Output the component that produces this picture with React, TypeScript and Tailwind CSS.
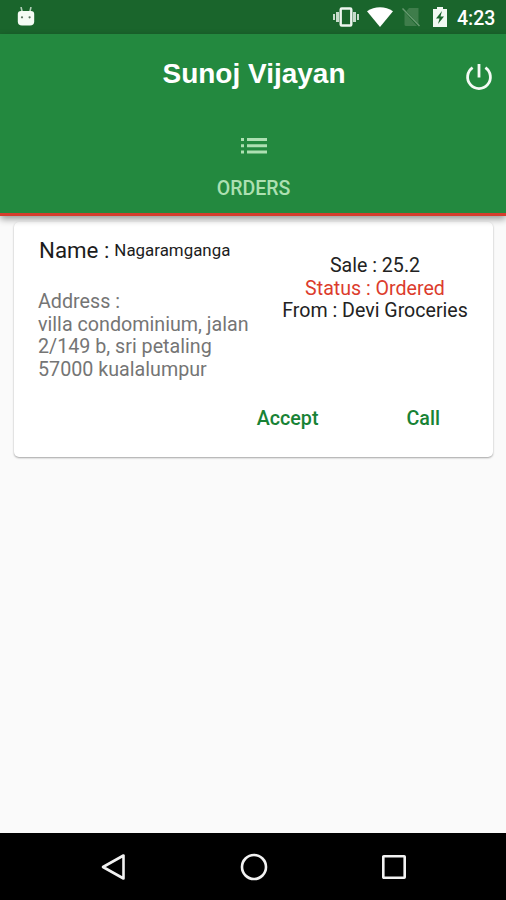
import React from 'react';

interface Order {
  name: string;
  address: string[];
  sale: string;
  status: string;
  from: string;
}

const orders: Order[] = [
  {
    name: 'Nagaramganga',
    address: ['villa condominium, jalan', '2/149 b, sri petaling', '57000 kualalumpur'],
    sale: '25.2',
    status: 'Ordered',
    from: 'Devi Groceries',
  },
];

const StatusBar = () => {
  return (
    <div className="h-[34px] bg-[#1a652c] flex items-center pl-[17px] pr-[11px] text-white">
      <svg width="18" height="20" viewBox="0 0 18 20" fill="#f4fbf4">
        <path d="M4 0 5.2 5M14 0 12.8 5" stroke="#b5d0ba" strokeWidth="1.6" />
        <path d="M.8 7Q.8 4 4 4H14Q17.200 4 17.200 7V14.500Q17.200 18.500 13 18.500H5Q.8 18.500 .8 14.500Z" />
        <circle cx="5" cy="10.300" r="1.100" fill="#56705b" />
        <circle cx="12.600" cy="10.300" r="1.100" fill="#56705b" />
      </svg>
      <svg className="ml-auto" width="26" height="20" viewBox="0 0 26 20" fill="#c6dbca">
        <path d="M0 7h2v6H0zM3 5h3v10H3zM24 7h2v6h-2zM20 5h3v10h-3z" />
        <rect x="7.700" y="1.500" width="10.600" height="17" rx="1" fill="none" stroke="#eef6ef" strokeWidth="2.400" />
      </svg>
      <svg className="ml-2" width="26" height="20" viewBox="0 0 26 20" fill="#fff">
        <path d="M0 4.200C7.500-1 18.500-1 26 4.200L13 20Z" />
      </svg>
      <svg className="ml-[9px]" width="18" height="20" viewBox="0 0 18 20">
        <path d="M7 1H16.500V17L4.500 4ZM2.500 5 15 19H4Q2.500 19 2.500 17.500Z" fill="#3f7d4b" />
        <path d="M.5 1.500 17.500 19" stroke="#689a71" strokeWidth="1.400" />
      </svg>
      <svg className="ml-[13px]" width="14" height="20" viewBox="0 0 14 20">
        <path d="M4 0h6v2h4v18H0V2h4z" fill="#f1f8f2" />
        <path d="M9 4 3 11.500H6.500L5 17 11 9.500H7.500Z" fill="#1a652c" />
      </svg>
      <span className="ml-[10px] mt-[3px] w-[38px] text-[19.5px] leading-none font-medium whitespace-nowrap">4:23</span>
    </div>
  );
};

const Header = () => {
  return (
    <div className="relative h-[182px] bg-[#23893f] border-b-[3px] border-[#d63d2e] shadow-[0_3px_7px_rgba(0,0,0,0.4)]">
      <div className="h-[79px] grid grid-cols-[1fr_auto_1fr] items-center">
        <h1 className="col-start-2 pl-[2px] font-['Liberation_Sans',Arial,sans-serif] text-[28px] font-bold text-white">
          Sunoj Vijayan
        </h1>
        <svg className="justify-self-end mr-[13px] mt-[6px]" width="28" height="28" viewBox="0 0 28 28" fill="none" stroke="#f4faf5" strokeWidth="2.800">
          <path d="M14 1V14.500M7.600 4.700A11.400 11.400 0 1 0 20.400 4.700" />
        </svg>
      </div>
      <div className="flex flex-col items-center text-[#ade0b2]">
        <svg className="ml-[1px] mt-[25px]" width="26" height="16" viewBox="0 0 26 16" fill="currentColor">
          <path d="M0 0h3v3H0zM6 0h20v3H6zM0 6.300h3v3H0zM6 6.300h20v3H6zM0 12.600h3v3H0zM6 12.600h20v3H6z" />
        </svg>
        <span className="ml-[1px] mt-[23px] text-[19.5px] leading-6 font-medium">ORDERS</span>
      </div>
    </div>
  );
};

const OrderCard = ({ order }: { order: Order }) => {
  return (
    <div className="ml-[14px] mr-[13px] mt-[6px] h-[235px] bg-white rounded-[5px] shadow-[0_1px_2px_rgba(0,0,0,0.35)]">
      <div className="flex h-[173px]">
        <div className="w-[244px] pl-[25px] pt-[15px]">
          <div className="flex items-center h-7 whitespace-nowrap text-[#1c1c1c]">
            <span className="text-[22.3px]">Name :</span>
            <span className="ml-[5px] text-[16.9px]">{order.name}</span>
          </div>
          <div className="mt-[26px] -ml-px text-[19.7px] leading-[22.7px] text-[#757575] whitespace-nowrap">
            <p>Address :</p>
            {order.address.map((line) => (
              <p key={line}>{line}</p>
            ))}
          </div>
        </div>
        <div className="flex-1 pr-[1px] pt-[33px] text-center text-[19.6px] leading-[22.5px] text-[#222] whitespace-nowrap">
          <p>Sale : {order.sale}</p>
          <p className="text-[#dc3c2c]">Status : {order.status}</p>
          <p>From : {order.from}</p>
        </div>
      </div>
      <div className="flex justify-end pt-[12px] pr-[53px] gap-[88px] text-[19.7px] leading-6 font-medium text-[#188235]">
        <button>Accept</button>
        <button>Call</button>
      </div>
    </div>
  );
};

const NavBar = () => {
  return (
    <div className="h-[67px] bg-black flex items-center justify-between pl-[100px] pr-[98px]">
      <svg width="28" height="28" viewBox="0 0 28 28" fill="none" stroke="#f2f2f2" strokeWidth="2.600">
        <path d="M23.500 2.500V25.500L3 14Z" strokeLinejoin="round" />
      </svg>
      <svg width="28" height="28" viewBox="0 0 28 28" fill="none" stroke="#f2f2f2" strokeWidth="2.600">
        <circle cx="14" cy="14" r="12" />
      </svg>
      <svg width="28" height="28" viewBox="0 0 28 28" fill="none" stroke="#f2f2f2" strokeWidth="2.600">
        <rect x="3.300" y="3.300" width="21.400" height="21.400" rx="0.500" />
      </svg>
    </div>
  );
};

const App = () => {
  return (
    <div className="w-[506px] h-[900px] flex flex-col overflow-hidden bg-[#fafafa] font-[Roboto,sans-serif]">
      <StatusBar />
      <Header />
      <div className="flex-1">
        {orders.map((order) => (
          <OrderCard key={order.name} order={order} />
        ))}
      </div>
      <NavBar />
    </div>
  );
};

export default App;
